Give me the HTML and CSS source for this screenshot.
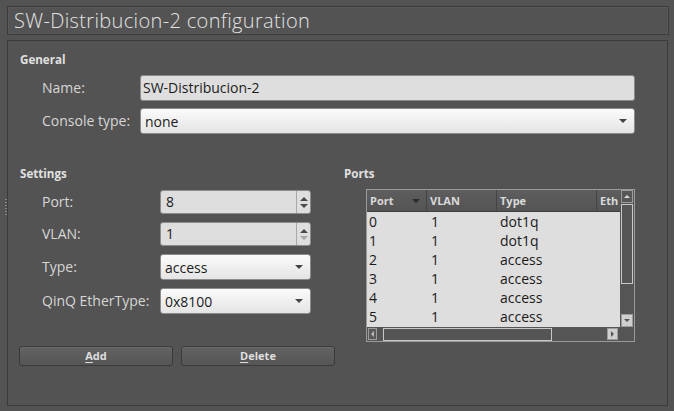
FILE: index.html
```html
<!DOCTYPE html>
<html>
<head>
<meta charset="utf-8">
<link rel="stylesheet" href="styles.css">
</head>
<body>
<div class="title">SW-Distribucion-2 configuration</div>
<div class="panel">
  <div class="grip"></div>
  <div class="heading">General</div>
  <div class="general">
    <div class="label">Name:</div>
    <div class="input">SW-Distribucion-2</div>
    <div class="label">Console type:</div>
    <div class="combo wide"><span>none</span><i class="tri"></i></div>
  </div>
  <div class="cols">
    <div class="settings">
      <div class="heading">Settings</div>
      <div class="sgrid">
        <div class="label">Port:</div>
        <div class="spin"><span>8</span><div class="arrows"><i class="up"></i><i class="down"></i></div></div>
        <div class="label">VLAN:</div>
        <div class="spin"><span>1</span><div class="arrows"><i class="up"></i><i class="down off"></i></div></div>
        <div class="label">Type:</div>
        <div class="combo"><span>access</span><i class="tri"></i></div>
        <div class="label">QinQ EtherType:</div>
        <div class="combo"><span>0x8100</span><i class="tri"></i></div>
      </div>
    </div>
    <div class="ports">
      <div class="heading">Ports</div>
      <div class="table">
        <div class="view">
          <div class="thead">
            <div class="th c1">Port<i class="sort"></i></div>
            <div class="th c2">VLAN</div>
            <div class="th c3">Type</div>
            <div class="th c4">Eth</div>
          </div>
          <div class="tr"><div class="c1">0</div><div class="c2">1</div><div class="c3">dot1q</div></div>
          <div class="tr"><div class="c1">1</div><div class="c2">1</div><div class="c3">dot1q</div></div>
          <div class="tr"><div class="c1">2</div><div class="c2">1</div><div class="c3">access</div></div>
          <div class="tr"><div class="c1">3</div><div class="c2">1</div><div class="c3">access</div></div>
          <div class="tr"><div class="c1">4</div><div class="c2">1</div><div class="c3">access</div></div>
          <div class="tr"><div class="c1">5</div><div class="c2">1</div><div class="c3">access</div></div>
        </div>
        <div class="vscroll">
          <div class="sbtn up-btn"><i class="tup"></i></div>
          <div class="vthumb"></div>
          <div class="vspace"></div>
          <div class="sbtn down-btn"><i class="tdown"></i></div>
        </div>
        <div class="hscroll">
          <div class="hbtn left-btn"><i class="tleft"></i></div>
          <div class="hthumb"></div>
          <div class="hspace"></div>
          <div class="hbtn right-btn"><i class="tright"></i></div>
        </div>
        <div class="corner"></div>
      </div>
    </div>
  </div>
  <div class="buttons">
    <div class="btn"><u>A</u>dd</div>
    <div class="btn"><u>D</u>elete</div>
  </div>
</div>
</body>
</html>
```

FILE: styles.css
```css
html, body {
  margin: 0;
  padding: 0;
  background: #535353;
  width: 674px;
  height: 411px;
  overflow: hidden;
  font-family: "Open Sans", "Noto Sans", sans-serif;
  color: #dcdcdc;
}
.title {
  margin: 6px 5px 0 7px;
  height: 27px;
  border: 1px solid #3b3b3b;
  box-shadow: inset 0 0 0 1px #5a5a5a;
  font-size: 20px;
  font-weight: 300;
  letter-spacing: 0.35px;
  line-height: 27px;
  padding-left: 6px;
  color: #e2e2e2;
}
.panel {
  position: relative;
  margin: 5px 6px 0 7px;
  height: 366px;
  border: 1px solid #3b3b3b;
  padding: 12px 0 0 12px;
  box-sizing: border-box;
}
.grip {
  position: absolute;
  left: -3px;
  top: 158px;
  width: 2px;
  height: 16px;
  background: repeating-linear-gradient(#8a8a8a 0 1px, #535353 1px 3px);
}
.heading {
  font-size: 11.6px;
  font-weight: 700;
  line-height: 14px;
  height: 14px;
  color: #e0e0e0;
}
.label {
  font-size: 14px;
  line-height: 20px;
  color: #d6d6d6;
  align-self: center;
}
.general {
  display: grid;
  grid-template-columns: 98px 495px;
  grid-auto-rows: 26px;
  row-gap: 7px;
  margin: 8px 0 0 22px;
}
.input {
  background: #dedede;
  border: 1px solid #8c8c8c;
  border-radius: 3px;
  box-sizing: border-box;
  font-size: 14px;
  line-height: 24px;
  padding-left: 2px;
  color: #1c1c1c;
}
.combo {
  display: flex;
  align-items: center;
  justify-content: space-between;
  background: linear-gradient(#fbfbfb, #e4e4e4);
  border: 1px solid #8c8c8c;
  border-radius: 3px;
  box-sizing: border-box;
  font-size: 14px;
  padding: 0 7px 0 4px;
  color: #1c1c1c;
}
.tri {
  width: 0;
  height: 0;
  border-left: 4px solid transparent;
  border-right: 4px solid transparent;
  border-top: 4px solid #444;
}
.cols {
  display: flex;
  margin-top: 33px;
}
.settings {
  width: 324px;
}
.sgrid {
  display: grid;
  grid-template-columns: 118px 151px;
  grid-template-rows: 24px 24px 26px 26px;
  row-gap: 8px;
  margin: 9px 0 0 22px;
}
.spin {
  display: flex;
  background: #dedede;
  border: 1px solid #8c8c8c;
  border-radius: 3px;
  box-sizing: border-box;
  font-size: 14px;
  color: #1c1c1c;
}
.spin span {
  flex: 1;
  line-height: 22px;
  padding-left: 5px;
}
.arrows {
  width: 13px;
  border-left: 1px solid #a8a8a8;
  display: flex;
  flex-direction: column;
  align-items: center;
  justify-content: center;
  gap: 3px;
}
.arrows .up {
  width: 0; height: 0;
  border-left: 4px solid transparent;
  border-right: 4px solid transparent;
  border-bottom: 4px solid #4a4a4a;
}
.arrows .down {
  width: 0; height: 0;
  border-left: 4px solid transparent;
  border-right: 4px solid transparent;
  border-top: 4px solid #4a4a4a;
}
.arrows .down.off { border-top-color: #a6a6a6; }
.ports {
  width: 291px;
}
.table {
  display: grid;
  grid-template-columns: 253px 14px;
  grid-template-rows: 137px 14px;
  margin: 8px 0 0 22px;
  width: 269px;
  height: 153px;
  border: 1px solid #9a9a9a;
  box-sizing: border-box;
  background: #555;
}
.view {
  overflow: hidden;
  background: #dedede;
}
.thead {
  display: flex;
  height: 22px;
  background: linear-gradient(#5e5e5e, #545454);
  border-bottom: 1px solid #3e3e3e;
  box-sizing: border-box;
  white-space: nowrap;
}
.th {
  position: relative;
  flex: none;
  font-size: 11px;
  font-weight: 700;
  line-height: 21px;
  color: #dadada;
  padding-left: 3px;
  box-sizing: border-box;
  border-right: 1px solid #444;
  overflow: hidden;
}
.c1 { width: 60px; flex: none; }
.c2 { width: 70px; flex: none; }
.c3 { width: 100px; flex: none; }
.c4 { width: 30px; flex: none; }
.sort {
  position: absolute;
  right: 6px;
  top: 9px;
  width: 0; height: 0;
  border-left: 4px solid transparent;
  border-right: 4px solid transparent;
  border-top: 4px solid #2a2a2a;
}
.tr {
  display: flex;
  height: 19px;
  font-size: 14px;
  line-height: 19px;
  color: #1a1a1a;
}
.tr > div { padding-left: 2px; box-sizing: border-box; }
.tr .c2 { padding-left: 4px; }
.tr .c3 { padding-left: 3px; }
.vscroll {
  display: flex;
  flex-direction: column;
  background: #555;
  padding: 0 1px 0 1px;
}
.sbtn {
  height: 13px;
  border: 1px solid #9c9c9c;
  box-sizing: border-box;
  display: flex;
  align-items: center;
  justify-content: center;
}
.up-btn { background: #575757; }
.down-btn { background: #cfcfcf; }
.tup {
  width: 0; height: 0;
  border-left: 3px solid transparent;
  border-right: 3px solid transparent;
  border-bottom: 3px solid #dcdcdc;
}
.tdown {
  width: 0; height: 0;
  border-left: 3px solid transparent;
  border-right: 3px solid transparent;
  border-top: 3px solid #555;
}
.vthumb {
  margin-top: 1px;
  height: 80px;
  border: 1px solid #c8c8c8;
  box-sizing: border-box;
  background: #555;
}
.vspace { flex: 1; }
.hscroll {
  display: flex;
  align-items: center;
  background: #555;
  padding: 0 0 0 1px;
}
.hbtn {
  height: 12px;
  width: 9px;
  border: 1px solid #9c9c9c;
  box-sizing: border-box;
  display: flex;
  align-items: center;
  justify-content: center;
}
.left-btn { background: #5a5a5a; }
.right-btn { background: #cfcfcf; width: 11px; margin-right: 2px; }
.tleft {
  width: 0; height: 0;
  border-top: 3px solid transparent;
  border-bottom: 3px solid transparent;
  border-right: 3px solid #bbb;
}
.tright {
  width: 0; height: 0;
  border-top: 3px solid transparent;
  border-bottom: 3px solid transparent;
  border-left: 3px solid #555;
}
.hthumb {
  margin-left: 6px;
  width: 169px;
  height: 13px;
  border: 1px solid #c8c8c8;
  box-sizing: border-box;
  background: #555;
}
.hspace { flex: 1; }
.corner { background: #555; }
.buttons {
  display: flex;
  gap: 8px;
  margin: 4px 0 0 -1px;
}
.btn {
  width: 154px;
  height: 20px;
  box-sizing: border-box;
  border: 1px solid #3a3a3a;
  border-radius: 3px;
  background: linear-gradient(#626262, #565656);
  box-shadow: inset 0 1px 0 #6a6a6a;
  font-size: 11px;
  font-weight: 700;
  line-height: 18px;
  text-align: center;
  color: #dedede;
}
.btn u { text-underline-offset: 2px; }
```
